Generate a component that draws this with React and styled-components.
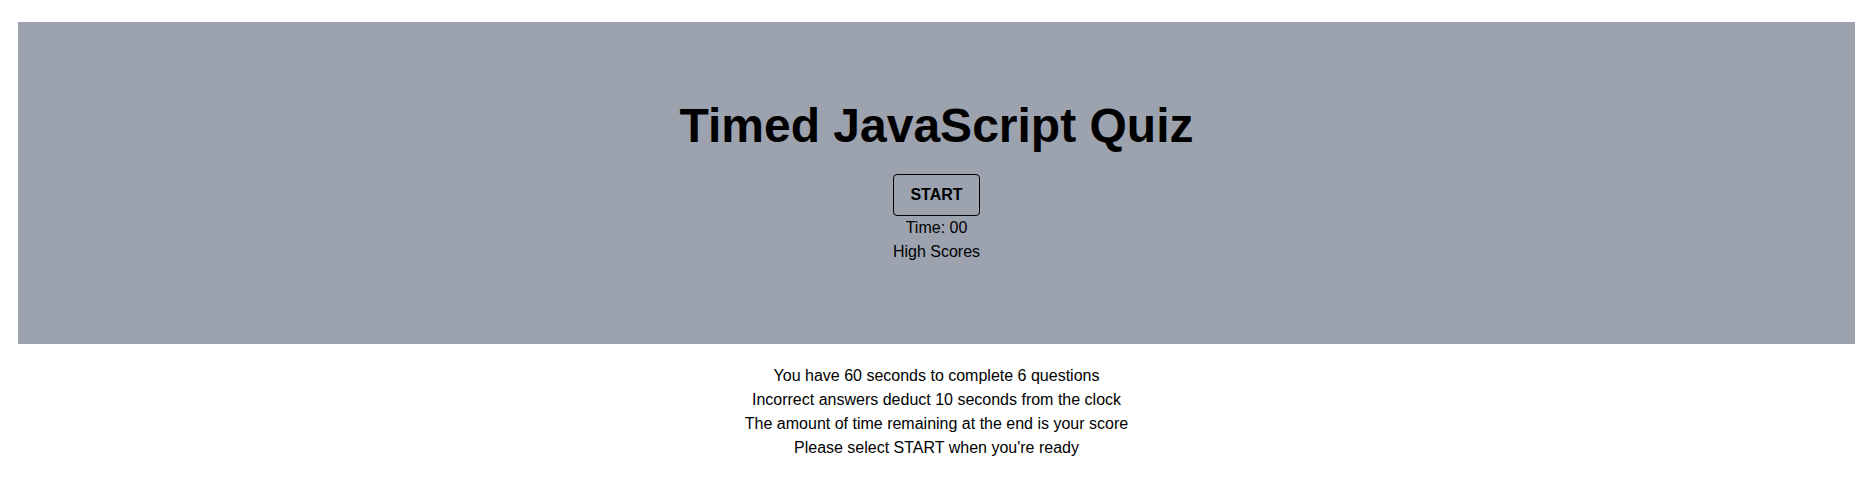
import React from 'react'
import styled, { createGlobalStyle } from 'styled-components'

const GlobalStyle = createGlobalStyle`
  * { box-sizing: border-box; }
  body {
    margin: 0;
    background: #ffffff;
    color: #000000;
    font-family: "Liberation Sans", Arial, Helvetica, sans-serif;
    font-size: 16px;
    line-height: 24px;
  }
`;

const Page = styled.div`
  padding: 22px 20px 0 18px;
`;

const Hero = styled.header`
  background-color: #9ca3af;
  padding: 80px 0;
  display: flex;
  flex-direction: column;
  align-items: center;
  text-align: center;
`;

const Title = styled.h1`
  margin: 0 0 24px 0;
  font-size: 48px;
  line-height: 48px;
  font-weight: 700;
`;

const StartButton = styled.button`
  font-family: inherit;
  font-size: 16px;
  line-height: 24px;
  font-weight: 700;
  color: #000;
  background: transparent;
  border: 1px solid #000;
  border-radius: 4px;
  padding: 8px 16px;
  cursor: pointer;
`;

const Line = styled.div`
  font-size: 16px;
  line-height: 24px;
`;

const Rules = styled.section`
  margin-top: 20px;
  display: flex;
  flex-direction: column;
  align-items: center;
  text-align: center;
`;

const rules = [
  'You have 60 seconds to complete 6 questions',
  'Incorrect answers deduct 10 seconds from the clock',
  'The amount of time remaining at the end is your score',
  "Please select START when you're ready",
];

export default function App() {
  return (
    <Page>
      <GlobalStyle />
      <Hero>
        <Title>Timed JavaScript Quiz</Title>
        <StartButton>START</StartButton>
        <Line>Time: 00</Line>
        <Line>High Scores</Line>
      </Hero>
      <Rules>
        {rules.map((r) => (
          <Line key={r}>{r}</Line>
        ))}
      </Rules>
    </Page>
  )
}
